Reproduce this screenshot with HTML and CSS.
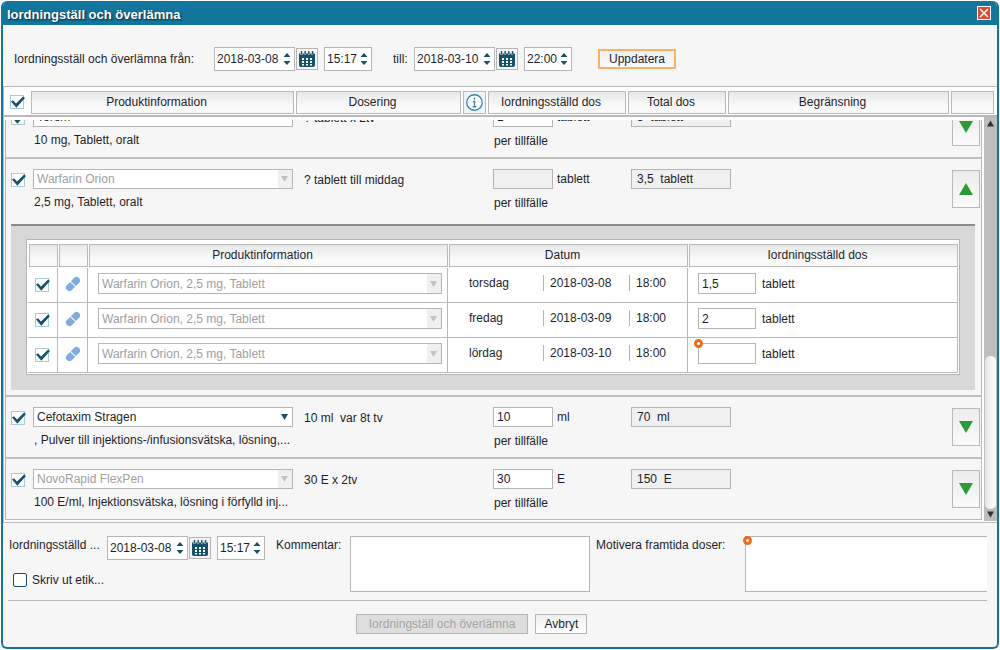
FILE: index.html
```
<!DOCTYPE html>
<html lang="sv">
<head>
<meta charset="utf-8">
<title>Iordningställ och överlämna</title>
<link rel="stylesheet" href="styles.css">
</head>
<body>
<svg class="symbols" aria-hidden="true">
  <symbol id="cal" viewBox="0 0 16 16">
    <path fill="#14526c" d="M0 2.500h1.500V4h2V2.500h2V4h1.500V2.500h2V4h1.500V2.500h2V4h1.500V2.500H16V14a2 2 0 0 1-2 2H2a2 2 0 0 1-2-2z"/>
    <path stroke="#14526c" stroke-width="1.400" d="M2.500 0v3.500M6.200 0v3.500M9.800 0v3.500M13.500 0v3.500"/>
    <path fill="#fff" d="M3 7h2v2H3zM7 7h2v2H7zM11 7h2v2h-2zM3 10h2v2H3zM7 10h2v2H7zM11 10h2v2h-2zM3 13h2v1.500H3zM7 13h2v1.500H7zM11 13h2v1.500h-2z"/>
  </symbol>
  <symbol id="spin" viewBox="0 0 8 12"><path fill="#14526c" d="M4 0l3.500 4h-7zM4 12L.5 8h7z"/></symbol>
  <symbol id="down" viewBox="0 0 14 12"><path d="M0 0h14L7 12z"/></symbol>
  <symbol id="up" viewBox="0 0 14 12"><path d="M0 12h14L7 0z"/></symbol>
  <symbol id="pill" viewBox="0 0 16 16">
    <g transform="rotate(-45 8 8)" fill="#7fabdf"><path d="M7.500 4.500H3a3.500 3.500 0 0 0 0 7h4.500z"/><path d="M8.500 4.500H13a3.500 3.500 0 0 1 0 7H8.500z"/></g>
  </symbol>
</svg>

<main class="window">
  <header class="titlebar">
    <h1>Iordningställ och överlämna</h1>
    <button class="close" aria-label="Stäng"><svg viewBox="0 0 12 12"><path d="M2 2l8 8M10 2l-8 8" stroke="#fff" stroke-width="1.700"/></svg></button>
  </header>

  <form class="filter">
    <label class="filter-label" for="from-date">Iordningsställ och överlämna från:</label>
    <div class="moment">
      <span class="spin date"><input id="from-date" value="2018-03-08"><svg><use href="#spin"/></svg></span>
      <button type="button" class="cal" aria-label="Kalender"><svg><use href="#cal"/></svg></button>
      <span class="spin time"><input aria-label="Tid från" value="15:17"><svg><use href="#spin"/></svg></span>
    </div>
    <label class="to-label" for="to-date">till:</label>
    <div class="moment">
      <span class="spin date"><input id="to-date" value="2018-03-10"><svg><use href="#spin"/></svg></span>
      <button type="button" class="cal" aria-label="Kalender"><svg><use href="#cal"/></svg></button>
      <span class="spin time"><input aria-label="Tid till" value="22:00"><svg><use href="#spin"/></svg></span>
    </div>
    <button type="button" class="update">Uppdatera</button>
  </form>

  <section class="list">
    <table class="meds">
      <thead>
        <tr>
          <th class="plain"><input type="checkbox" class="check" aria-label="Välj alla" checked></th>
          <th>Produktinformation</th>
          <th>Dosering</th>
          <th class="info"><svg viewBox="0 0 16 16" role="img" aria-label="Info"><circle cx="8" cy="8" r="7.300" fill="#fff" stroke="#3585a8" stroke-width="1.200"/><path d="M8 3.500v1.800M6.500 7H8v5M6.300 12h3.500" fill="none" stroke="#3585a8" stroke-width="1.300"/></svg></th>
          <th>Iordningsställd dos</th>
          <th>Total dos</th>
          <th>Begränsning</th>
          <th></th>
        </tr>
      </thead>
      <tbody>
        <tr class="med">
          <td><input type="checkbox" class="check" aria-label="Torem" checked></td>
          <td><span class="select"><select aria-label="Produkt"><option>Torem</option></select><svg><use href="#down"/></svg></span><p>10 mg, Tablett, oralt</p></td>
          <td class="dosing">? tablett x 2tv</td>
          <td></td>
          <td><label class="dose"><input value="1"> tablett</label><p class="per">per tillfälle</p></td>
          <td><input class="total" aria-label="Total dos" value="3  tablett" readonly></td>
          <td></td>
          <td><button class="toggle" aria-label="Visa"><svg><use href="#down"/></svg></button></td>
        </tr>
        <tr class="med open">
          <td><input type="checkbox" class="check" aria-label="Warfarin Orion" checked></td>
          <td><span class="select"><select aria-label="Produkt" disabled><option>Warfarin Orion</option></select><svg><use href="#down"/></svg></span><p>2,5 mg, Tablett, oralt</p></td>
          <td class="dosing">? tablett till middag</td>
          <td></td>
          <td><label class="dose"><input disabled> tablett</label><p class="per">per tillfälle</p></td>
          <td><input class="total" aria-label="Total dos" value="3,5  tablett" readonly></td>
          <td></td>
          <td><button class="toggle" aria-label="Dölj"><svg><use href="#up"/></svg></button></td>
        </tr>
        <tr class="detail">
          <td>
            <div class="panel">
              <div class="frame">
                <table class="doses">
                  <colgroup><col class="c-icon"><col class="c-icon"><col class="c-product"><col class="c-date"><col class="c-dose"></colgroup>
                  <thead>
                    <tr><th><div></div></th><th><div></div></th><th><div>Produktinformation</div></th><th><div>Datum</div></th><th><div>Iordningsställd dos</div></th></tr>
                  </thead>
                  <tbody>
                    <tr>
                      <td><input type="checkbox" class="check" aria-label="torsdag" checked></td>
                      <td><svg class="pill"><use href="#pill"/></svg></td>
                      <td><span class="select"><select aria-label="Produkt" disabled><option>Warfarin Orion, 2,5 mg, Tablett</option></select><svg><use href="#down"/></svg></span></td>
                      <td><div class="when"><span>torsdag</span><span>2018-03-08</span><span>18:00</span></div></td>
                      <td><label class="dose"><input value="1,5"> tablett</label></td>
                    </tr>
                    <tr>
                      <td><input type="checkbox" class="check" aria-label="fredag" checked></td>
                      <td><svg class="pill"><use href="#pill"/></svg></td>
                      <td><span class="select"><select aria-label="Produkt" disabled><option>Warfarin Orion, 2,5 mg, Tablett</option></select><svg><use href="#down"/></svg></span></td>
                      <td><div class="when"><span>fredag</span><span>2018-03-09</span><span>18:00</span></div></td>
                      <td><label class="dose"><input value="2"> tablett</label></td>
                    </tr>
                    <tr>
                      <td><input type="checkbox" class="check" aria-label="lördag" checked></td>
                      <td><svg class="pill"><use href="#pill"/></svg></td>
                      <td><span class="select"><select aria-label="Produkt" disabled><option>Warfarin Orion, 2,5 mg, Tablett</option></select><svg><use href="#down"/></svg></span></td>
                      <td><div class="when"><span>lördag</span><span>2018-03-10</span><span>18:00</span></div></td>
                      <td><label class="dose required"><input> tablett</label></td>
                    </tr>
                  </tbody>
                </table>
              </div>
            </div>
          </td>
        </tr>
        <tr class="med">
          <td><input type="checkbox" class="check" aria-label="Cefotaxim Stragen" checked></td>
          <td><span class="select"><select aria-label="Produkt"><option>Cefotaxim Stragen</option></select><svg><use href="#down"/></svg></span><p>, Pulver till injektions-/infusionsvätska, lösning,...</p></td>
          <td class="dosing">10 ml&nbsp; var 8t tv</td>
          <td></td>
          <td><label class="dose"><input value="10"> ml</label><p class="per">per tillfälle</p></td>
          <td><input class="total" aria-label="Total dos" value="70  ml" readonly></td>
          <td></td>
          <td><button class="toggle" aria-label="Visa"><svg><use href="#down"/></svg></button></td>
        </tr>
        <tr class="med">
          <td><input type="checkbox" class="check" aria-label="NovoRapid FlexPen" checked></td>
          <td><span class="select"><select aria-label="Produkt" disabled><option>NovoRapid FlexPen</option></select><svg><use href="#down"/></svg></span><p>100 E/ml, Injektionsvätska, lösning i förfylld inj...</p></td>
          <td class="dosing">30 E x 2tv</td>
          <td></td>
          <td><label class="dose"><input value="30"> E</label><p class="per">per tillfälle</p></td>
          <td><input class="total" aria-label="Total dos" value="150  E" readonly></td>
          <td></td>
          <td><button class="toggle" aria-label="Visa"><svg><use href="#down"/></svg></button></td>
        </tr>
      </tbody>
    </table>
    <div class="scrollbar">
      <svg><use href="#up"/></svg>
      <div class="track"><div class="thumb"></div></div>
      <svg><use href="#down"/></svg>
    </div>
  </section>

  <form class="footer">
    <div class="fields">
      <div class="prepared">
        <div class="prepared-row">
          <label for="prepared-date">Iordningsställd ...</label>
          <div class="moment">
            <span class="spin date"><input id="prepared-date" value="2018-03-08"><svg><use href="#spin"/></svg></span>
            <button type="button" class="cal" aria-label="Kalender"><svg><use href="#cal"/></svg></button>
            <span class="spin time"><input aria-label="Tid" value="15:17"><svg><use href="#spin"/></svg></span>
          </div>
        </div>
        <label class="print"><input type="checkbox" class="check outline"> Skriv ut etik...</label>
      </div>
      <label class="caption" for="comment">Kommentar:</label>
      <textarea id="comment"></textarea>
      <label class="caption motivate" for="motivation">Motivera framtida doser:</label>
      <div class="required grow"><textarea id="motivation" class="cut"></textarea></div>
    </div>
    <div class="actions">
      <button type="button" disabled>Iordningställ och överlämna</button>
      <button type="button">Avbryt</button>
    </div>
  </form>
</main>
</body>
</html>
```
FILE: styles.css
```
*, *::before { box-sizing: border-box; }
body {
  margin: 0;
  height: 100vh;
  padding: 1px;
  background: #fff;
  color: #1e1e2a;
  font-family: "Liberation Sans", Arial, sans-serif;
  font-size: 12px;
  line-height: 16px;
}
input, select, textarea, button { font: inherit; color: inherit; margin: 0; border-radius: 0; }
button { padding: 0; }
p { margin: 0; }
svg { display: block; }
.symbols { position: absolute; width: 0; height: 0; }

.window {
  display: flex;
  flex-direction: column;
  height: 100%;
  border: 2px solid #12759b;
  border-top-width: 0;
  border-radius: 6px;
  background: #f6f6f6;
  overflow: hidden;
}

.titlebar {
  display: flex;
  align-items: center;
  justify-content: space-between;
  height: 24px;
  flex: none;
  padding: 0 6px 0 4px;
  background: #12759b;
}
.titlebar h1 {
  margin: 0;
  padding-top: 4px;
  font-size: 13px;
  color: #fff;
  text-shadow: 1px 1px 2px #123;
}
.close {
  width: 14px;
  height: 14px;
  border: 1px solid #fff;
  background: #e8432c;
}

.filter {
  display: flex;
  align-items: center;
  flex: none;
  height: 61px;
  padding: 6px 11px 0;
}
.filter-label { width: 200px; }
.to-label { width: 21px; margin-left: 21px; }
.moment { display: flex; align-items: center; }
.spin {
  display: flex;
  align-items: center;
  height: 24px;
  border: 1px solid #b5b5b5;
  background: #fff;
  padding: 0 3px 0 2px;
}
.spin.date { width: 81px; }
.spin.time { width: 48px; }
.spin input {
  flex: 1;
  min-width: 0;
  padding: 0;
  border: 0;
  background: none;
}
.spin svg { width: 8px; height: 12px; flex: none; }
.cal {
  display: grid;
  place-items: center;
  width: 22px;
  height: 22px;
  margin: 0 6px 0 1px;
  border: 1px solid #b5b5b5;
  background: #f4f4f4;
}
.cal svg { width: 16px; height: 16px; }
.update {
  width: 78px;
  height: 20px;
  margin-left: 26px;
  border: 2px solid #f7b468;
  background: linear-gradient(#eee, #fafafa);
}

.list {
  flex: 1;
  min-height: 0;
  display: grid;
  grid-template-columns: minmax(0, 1fr) 13px;
  grid-template-rows: auto minmax(0, 1fr);
  border: solid #b9b9b9;
  border-width: 1px 0 1px 1px;
  background: #fff;
}
.meds { display: contents; }
.meds > thead {
  display: block;
  grid-column: 1 / -1;
  border-bottom: 2px solid #b9b9b9;
}
.meds > thead > tr {
  display: grid;
  grid-template-columns: 24px 263px 165px 23px 138px 98px minmax(0, 1fr) 43px;
  gap: 2px;
  padding: 4px 3px 1px 1px;
}
.meds > thead th, .doses th div {
  height: 23px;
  padding: 2px 12px 0 0;
  border: 1px solid #b9b9b9;
  background: linear-gradient(#e6e8e8, #fafafa 70%);
  font-weight: normal;
  text-align: center;
}
.meds > thead th.plain { border: 0; background: none; padding: 4px 0 0 5px; }
.meds > thead th.info { padding: 2px; background: #eef4f7; }
.info svg { width: 17px; height: 17px; }

.meds > tbody {
  display: flex;
  flex-direction: column;
  justify-content: flex-end;
  overflow: hidden;
  margin: 3px 2px 2px 1px;
  border: solid #b9b9b9;
  border-width: 0 1px 1px;
  background: #f6f6f6;
}
.med {
  display: grid;
  flex: none;
  grid-template-columns: 22px 271px 159px 30px 138px 100px minmax(0, 1fr) 28px;
  height: 62px;
  padding: 10px 1px 0 5px;
  border-bottom: 2px solid #c0c0c0;
}
.med:last-child { height: 60px; border-bottom: 0; }
.med.open { height: 65px; border-bottom: 0; }
.med td { padding: 0; }
.med p { padding: 5px 0 0 1px; white-space: nowrap; }
.med p.per { padding-top: 6px; }
.med .check { margin-top: 4px; }
.med .dosing { padding-top: 3px; }

.check {
  appearance: none;
  display: block;
  flex: none;
  width: 14px;
  height: 14px;
  border: 1px solid #a9cbd8;
  background: #fff;
}
.check:checked::before {
  content: "";
  display: block;
  width: 14px;
  height: 12px;
  background: #17536b;
  clip-path: polygon(0 45%, 14% 35%, 36% 62%, 86% 4%, 100% 16%, 38% 98%);
}
.check.outline { border-color: #14526c; border-radius: 2px; }

.select { display: grid; width: 260px; height: 20px; }
.select > * { grid-area: 1 / 1; }
.select select {
  appearance: none;
  min-width: 0;
  padding: 0 16px 0 3px;
  border: 1px solid #b5b5b5;
  background: #fff;
}
.select select:disabled {
  opacity: 1;
  color: #a0a0a0;
  background: linear-gradient(90deg, transparent calc(100% - 14px), #f0f0f0 0), #fff;
}
.select svg {
  justify-self: end;
  align-self: center;
  width: 7px;
  height: 6px;
  margin-right: 5px;
  fill: #14526c;
  pointer-events: none;
}
.select select:disabled + svg { fill: #c2c2c2; }

.dose { position: relative; display: flex; align-items: center; gap: 4px; }
.dose input {
  width: 60px;
  height: 20px;
  padding: 0 3px;
  border: 1px solid #b5b5b5;
  background: #fff;
}
.dose input:disabled, .total { background: #f0f0f0; }
.total {
  display: block;
  width: 100px;
  height: 20px;
  padding: 0 5px;
  border: 1px solid #b5b5b5;
}
.toggle {
  display: grid;
  place-items: center;
  width: 28px;
  height: 38px;
  margin-top: 1px;
  border: 1px solid #b9b9b9;
  background: linear-gradient(#ececec, #fafafa);
}
.toggle svg { width: 14px; height: 12px; fill: #2b9b35; }

.detail { display: block; flex: none; border-bottom: 2px solid #c0c0c0; }
.detail > td { display: block; padding: 0 6px 5px 5px; }
.panel {
  padding: 13px 15px 15px;
  border-top: 2px solid #8c8c8c;
  background: #d8d8d8;
}
.frame { padding: 4px 1px 1px; border: 1px solid #b5b5b5; background: #fff; }
.doses { width: 100%; table-layout: fixed; border-collapse: separate; border-spacing: 0; }
.c-icon { width: 30px; }
.c-date { width: 240px; }
.c-dose { width: 270px; }
.doses th { padding: 0 0 1px 1px; }
.doses td {
  height: 35px;
  padding: 5px 5px 0 10px;
  border: solid #b9b9b9;
  border-width: 0 1px 1px 0;
  vertical-align: top;
}
.doses td:nth-child(-n+2) { padding: 8px 0 0 7px; }
.doses td:first-child .check { margin-top: 2px; }
.doses .select { width: 100%; height: 21px; }
.doses .dose { gap: 6px; }
.doses .dose input { width: 58px; height: 21px; }
.pill { width: 16px; height: 16px; }
.when { display: grid; grid-template-columns: 74px 86px auto; padding: 2px 0 0 11px; }
.when span + span { padding-left: 6px; border-left: 1px solid #b5b5b5; }

.required { position: relative; }
.required::before {
  content: "";
  position: absolute;
  left: -4px;
  top: -4px;
  width: 9px;
  height: 9px;
  border: 3px solid #f26a13;
  border-radius: 50%;
  background: #fff;
}

.scrollbar {
  grid-area: 2 / 2;
  display: flex;
  flex-direction: column;
  align-items: center;
  margin-bottom: 1px;
  padding: 3px 0;
  background: #bdbdbd;
}
.scrollbar > svg { width: 7px; height: 7px; fill: #333; }
.track { flex: 1; width: 11px; display: flex; flex-direction: column; justify-content: flex-end; padding-bottom: 2px; }
.thumb { height: 40%; border-radius: 5px; background: linear-gradient(90deg, #e6e6e6, #fff); }

.footer { flex: none; padding: 13px 10px 13px 5px; }
.fields { display: flex; align-items: flex-start; padding-bottom: 8px; border-bottom: 1px solid #b9b9b9; }
.prepared { width: 268px; padding-left: 1px; }
.prepared-row { display: flex; }
.prepared-row > label { width: 98px; padding-top: 1px; }
.print { display: flex; align-items: center; gap: 5px; padding: 12px 0 0 4px; }
.caption { width: 74px; padding-top: 1px; white-space: nowrap; }
.motivate { width: 149px; margin-left: 6px; }
textarea {
  display: block;
  width: 240px;
  height: 56px;
  padding: 2px 4px;
  border: 1px solid #b5b5b5;
  background: #fff;
  resize: none;
}
.grow { flex: 1; }
.required.grow::before { left: -2px; top: 0; }
.cut { width: 100%; border-right: 0; }
.actions { display: flex; justify-content: center; gap: 7px; padding-top: 13px; padding-right: 52px; }
.actions button {
  height: 20px;
  padding: 0 8px;
  border: 1px solid #b5b5b5;
  background: linear-gradient(#f0f0f0, #fff);
}
.actions button:disabled { padding: 0 12px; color: #a3a3a3; background: #dedede; }
```
